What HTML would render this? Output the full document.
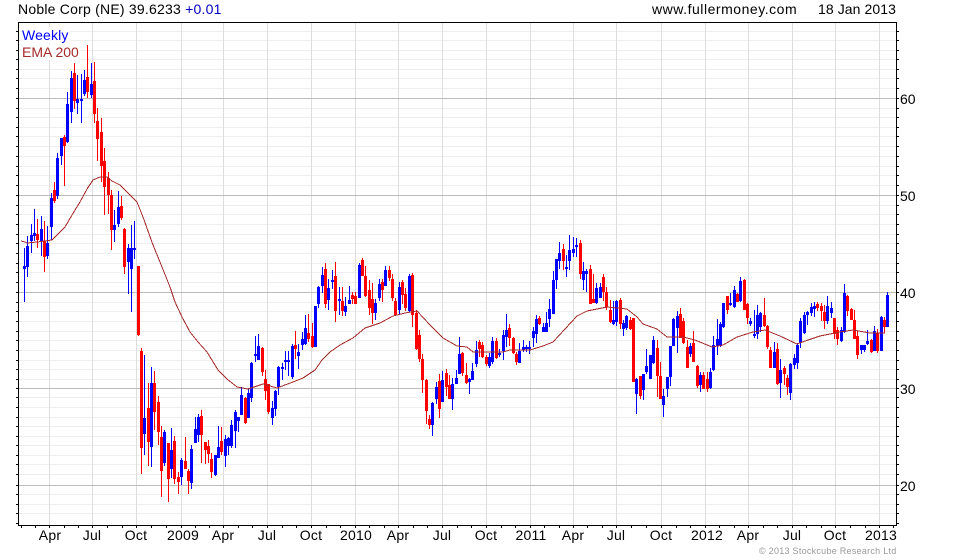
<!DOCTYPE html>
<html><head><meta charset="utf-8"><title>Noble Corp</title>
<style>
html,body{margin:0;padding:0;background:#fff;width:980px;height:560px;overflow:hidden}
#c{position:relative;width:980px;height:560px;font-family:"Liberation Sans",Arial,sans-serif;font-size:14px;color:#000}
svg{position:absolute;left:0;top:0}
.t{position:absolute;white-space:nowrap;line-height:16px;height:16px}
.a{position:absolute;top:527px;white-space:nowrap;line-height:16px;transform:translateX(-50%);letter-spacing:.2px}
.y{position:absolute;left:900px;line-height:16px}
</style></head><body><div id="c">
<svg width="980" height="560" viewBox="0 0 980 560" shape-rendering="crispEdges" fill="none">
<path stroke="#eeeeee" d="M18 31.5H896M18 40.5H896M18 50.5H896M18 59.5H896M18 69.5H896M18 78.5H896M18 88.5H896M18 108.5H896M18 117.5H896M18 127.5H896M18 136.5H896M18 146.5H896M18 156.5H896M18 166.5H896M18 175.5H896M18 185.5H896M18 205.5H896M18 214.5H896M18 224.5H896M18 234.5H896M18 243.5H896M18 253.5H896M18 263.5H896M18 272.5H896M18 282.5H896M18 302.5H896M18 311.5H896M18 321.5H896M18 331.5H896M18 340.5H896M18 350.5H896M18 360.5H896M18 369.5H896M18 379.5H896M18 397.5H896M18 407.5H896M18 417.5H896M18 426.5H896M18 436.5H896M18 445.5H896M18 455.5H896M18 464.5H896M18 474.5H896M18 494.5H896M18 504.5H896M18 513.5H896"/>
<path stroke="#dddddd" d="M49.5 23V525M92.5 23V525M136.5 23V525M181.5 23V525M223.5 23V525M267.5 23V525M311.5 23V525M355.5 23V525M398.5 23V525M442.5 23V525M486.5 23V525M530.5 23V525M573.5 23V525M616.5 23V525M661.5 23V525M705.5 23V525M748.5 23V525M792.5 23V525M835.5 23V525M879.5 23V525"/>
<path stroke="#bbbbbb" d="M18 98.5H896M18 195.5H896M18 292.5H896M18 388.5H896M18 485.5H896"/>
<path stroke="#0000ff" d="M24.5 248V302M27.5 236V277M31.5 224V253M34.5 209V241M41.5 216V256M47.5 226V259M51.5 193V240M57.5 153V199M61.5 138V165M67.5 92V143M71.5 71V123M77.5 75V114M81.5 74V123M84.5 70V96M91.5 63V98M114.5 210V242M118.5 191V227M128.5 244V294M131.5 225V312M134.5 221V259M144.5 355V455M151.5 367V467M164.5 430V466M171.5 428V478M181.5 458V485M191.5 445V489M195.5 417V442M198.5 414V442M215.5 455V476M218.5 426V458M225.5 435V467M228.5 437V455M231.5 420V448M235.5 410V448M238.5 417V432M241.5 387V415M248.5 388V418M251.5 362V402M255.5 336V362M258.5 334V360M272.5 401V425M275.5 390V416M278.5 366V395M282.5 363V380M285.5 351V370M288.5 351V376M292.5 344V379M298.5 344V369M302.5 332V350M305.5 315V345M315.5 306V347M318.5 286V308M322.5 267V293M328.5 279V310M332.5 270V289M339.5 287V315M345.5 297V316M349.5 286V304M359.5 263V298M375.5 299V320M379.5 279V301M385.5 266V286M399.5 282V315M409.5 274V312M432.5 402V436M436.5 382V404M442.5 371V402M452.5 378V410M456.5 370V384M459.5 337V374M469.5 378V394M472.5 363V380M476.5 341V367M489.5 353V368M492.5 337V364M499.5 349V357M503.5 330V360M506.5 314V347M519.5 343V363M523.5 340V352M526.5 345V352M529.5 341V354M533.5 327V347M536.5 315V343M543.5 323V332M546.5 312V332M549.5 299V327M553.5 271V314M556.5 259V289M559.5 242V269M566.5 255V277M569.5 235V270M573.5 237V257M576.5 238V257M583.5 262V290M586.5 269V292M596.5 283V304M600.5 283V298M613.5 301V325M616.5 300V326M623.5 320V336M626.5 315V330M636.5 378V414M643.5 374V400M646.5 349V374M650.5 355V379M653.5 336V364M663.5 389V417M667.5 377V397M670.5 346V386M673.5 318V346M677.5 311V353M690.5 343V357M700.5 372V392M710.5 368V389M713.5 336V371M717.5 319V355M720.5 322V347M723.5 303V328M730.5 293V306M734.5 286V308M740.5 277V302M750.5 318V326M754.5 310V338M757.5 305V339M760.5 312V332M774.5 342V368M780.5 359V398M790.5 363V400M794.5 354V369M797.5 343V369M800.5 318V348M804.5 312V334M807.5 311V325M811.5 303V316M814.5 302V317M827.5 296V324M831.5 302V318M841.5 327V342M844.5 284V333M861.5 345V354M864.5 345V352M867.5 330V345M874.5 326V351M881.5 316V351M887.5 292V327"/>
<path stroke="#0000ff" stroke-width="3" d="M24.5 266V269M27.5 246V267M31.5 235V241M34.5 233V236M41.5 229V241M47.5 243V256M51.5 198V227M57.5 158V196M61.5 138V156M67.5 104V142M71.5 78V112M77.5 99V103M81.5 99V101M84.5 80V94M91.5 84V95M114.5 225V230M118.5 207V224M128.5 248V262M131.5 248V269M134.5 248V250M144.5 418V434M151.5 383V447M164.5 432V463M171.5 450V469M181.5 460V477M191.5 449V483M195.5 429V443M198.5 417V435M215.5 455V475M218.5 447V458M225.5 439V456M228.5 438V446M231.5 425V446M235.5 412V431M238.5 417V421M241.5 395V415M248.5 393V418M251.5 363V398M255.5 354V356M258.5 346V360M272.5 408V418M275.5 391V409M278.5 367V387M282.5 367V369M285.5 360V362M288.5 360V362M292.5 346V377M298.5 352V356M302.5 339V345M305.5 328V344M315.5 306V347M318.5 287V304M322.5 275V286M328.5 288V300M332.5 280V282M339.5 299V301M345.5 306V312M349.5 300V304M359.5 265V298M375.5 303V313M379.5 284V298M385.5 270V286M399.5 287V310M409.5 276V311M432.5 403V425M436.5 387V399M442.5 380V402M452.5 384V399M456.5 378V384M459.5 354V374M469.5 379V382M472.5 371V380M476.5 350V364M489.5 357V366M492.5 341V362M499.5 353V355M503.5 335V351M506.5 330V337M519.5 351V363M523.5 347V350M526.5 347V349M529.5 347V349M533.5 331V338M536.5 319V334M543.5 327V332M546.5 323V332M549.5 309V319M553.5 280V314M556.5 259V280M559.5 253V261M566.5 267V269M569.5 250V261M573.5 249V253M576.5 245V247M583.5 271V280M586.5 271V274M596.5 288V303M600.5 287V298M613.5 320V324M616.5 301V322M623.5 323V329M626.5 316V328M636.5 379V394M643.5 374V390M646.5 366V372M650.5 355V379M653.5 340V363M663.5 396V405M667.5 377V389M670.5 346V377M673.5 319V346M677.5 316V328M690.5 346V354M700.5 375V385M710.5 372V388M713.5 345V370M717.5 339V346M720.5 324V346M723.5 303V327M730.5 303V305M734.5 290V307M740.5 281V301M750.5 321V324M754.5 334V336M757.5 315V334M760.5 313V327M774.5 352V368M780.5 370V383M790.5 364V393M794.5 358V365M797.5 345V363M800.5 321V343M804.5 315V333M807.5 312V315M811.5 307V313M814.5 306V309M827.5 306V321M831.5 308V313M841.5 330V341M844.5 293V332M861.5 345V350M864.5 345V350M867.5 341V344M874.5 331V351M881.5 317V351M887.5 295V327"/>
<path stroke="#ff0000" d="M37.5 219V248M44.5 221V272M54.5 182V203M64.5 135V186M74.5 63V109M87.5 45V98M94.5 62V123M97.5 108V161M101.5 118V182M104.5 148V215M108.5 172V214M111.5 190V250M121.5 196V220M124.5 228V274M138.5 266V336M141.5 348V474M148.5 383V466M154.5 371V430M158.5 396V445M161.5 426V497M168.5 443V502M174.5 436V484M178.5 472V494M185.5 437V469M188.5 469V494M201.5 410V463M205.5 442V464M208.5 440V463M211.5 453V478M221.5 427V455M245.5 397V424M262.5 347V376M265.5 370V400M268.5 384V414M295.5 331V359M308.5 314V342M312.5 323V348M325.5 263V308M335.5 262V322M342.5 287V316M352.5 292V304M355.5 292V304M362.5 258V276M365.5 266V297M369.5 280V315M372.5 283V324M382.5 279V302M389.5 266V281M392.5 274V301M395.5 298V315M402.5 280V304M405.5 288V311M412.5 273V327M416.5 310V350M419.5 330V362M422.5 354V393M426.5 379V424M429.5 415V429M439.5 374V418M446.5 369V396M449.5 375V399M462.5 352V376M466.5 363V384M479.5 340V357M482.5 342V358M486.5 355V366M496.5 338V359M509.5 324V346M513.5 337V354M516.5 352V365M539.5 316V325M563.5 244V270M580.5 240V279M590.5 265V304M593.5 274V303M603.5 274V301M606.5 287V310M610.5 300V323M620.5 298V329M630.5 317V330M633.5 318V382M640.5 376V399M657.5 340V397M660.5 362V399M680.5 308V338M683.5 318V344M687.5 340V368M693.5 331V362M697.5 365V388M703.5 372V389M707.5 372V392M727.5 296V314M737.5 293V302M744.5 279V310M747.5 303V324M764.5 298V327M767.5 325V349M770.5 347V368M777.5 343V385M784.5 366V385M787.5 375V395M817.5 302V311M821.5 303V321M824.5 305V329M834.5 318V339M837.5 327V345M847.5 295V316M851.5 308V320M854.5 310V339M857.5 331V359M871.5 339V353M877.5 329V353M884.5 317V333"/>
<path stroke="#ff0000" stroke-width="3" d="M37.5 234V240M44.5 241V257M54.5 190V201M64.5 137V146M74.5 73V101M87.5 77V92M94.5 81V114M97.5 121V139M101.5 132V166M104.5 161V187M108.5 178V195M111.5 195V230M121.5 206V218M124.5 229V267M138.5 266V335M141.5 351V448M148.5 408V442M154.5 383V412M158.5 402V432M161.5 437V471M168.5 443V479M174.5 441V479M178.5 477V482M185.5 461V469M188.5 471V481M201.5 416V435M205.5 442V450M208.5 446V454M211.5 459V472M221.5 441V452M245.5 398V423M262.5 348V372M265.5 379V391M268.5 384V412M295.5 345V349M308.5 333V339M312.5 336V347M325.5 269V304M335.5 276V311M342.5 301V311M352.5 295V299M355.5 296V304M362.5 260V276M365.5 276V296M369.5 290V308M372.5 299V313M382.5 282V290M389.5 270V278M392.5 279V298M395.5 301V315M402.5 282V295M405.5 294V308M412.5 275V315M416.5 313V349M419.5 335V359M422.5 359V380M426.5 380V411M429.5 419V425M439.5 381V409M446.5 373V387M449.5 385V399M462.5 353V373M466.5 375V383M479.5 342V349M482.5 345V357M486.5 357V364M496.5 341V358M509.5 328V338M513.5 338V353M516.5 354V362M539.5 318V324M563.5 249V261M580.5 243V274M590.5 269V304M593.5 299V303M603.5 277V292M606.5 292V307M610.5 310V322M620.5 300V324M630.5 320V329M633.5 318V382M640.5 376V396M657.5 348V376M660.5 376V399M680.5 314V338M683.5 321V343M687.5 347V368M693.5 343V362M697.5 366V386M703.5 375V389M707.5 379V389M727.5 296V310M737.5 294V302M744.5 280V310M747.5 304V318M764.5 315V326M767.5 326V347M770.5 350V368M777.5 349V384M784.5 368V374M787.5 378V387M817.5 304V308M821.5 306V311M824.5 312V321M834.5 318V334M837.5 330V339M847.5 296V311M851.5 309V320M854.5 320V339M857.5 336V355M871.5 340V352M877.5 333V351M884.5 320V327"/>
<polyline stroke="#a52a2a" points="21,241 25,242 27,243 37,242 52,240 58,234 65,227 72,215 80,202 87,189 93,180 100,177 107,177 112,181 120,185 130,195 137,202 143,217 153,245 160,262 170,287 175,302 182,317 190,332 198,342 207,352 218,370 227,379 237,387 248,389 263,384 277,388 293,382 303,378 315,370 322,360 330,352 340,345 353,338 365,328 380,323 393,316 405,313 417,311 430,325 443,338 457,346 467,347 473,352 503,352 510,350 530,350 543,346 553,342 565,329 577,316 587,311 607,307 627,309 637,317 643,324 657,329 667,337 683,337 695,340 712,347 723,345 737,337 753,332 765,330 780,336 797,344 808,340 820,336 840,332 853,330 870,333 885,333"/>
<path stroke="#000" d="M18.5 22.5H896.5V525.5H18.5ZM16 31.5H18M16 40.5H18M16 50.5H18M16 59.5H18M16 69.5H18M16 78.5H18M16 88.5H18M16 98.5H18M16 108.5H18M16 117.5H18M16 127.5H18M16 136.5H18M16 146.5H18M16 156.5H18M16 166.5H18M16 175.5H18M16 185.5H18M16 195.5H18M16 205.5H18M16 214.5H18M16 224.5H18M16 234.5H18M16 243.5H18M16 253.5H18M16 263.5H18M16 272.5H18M16 282.5H18M16 292.5H18M16 302.5H18M16 311.5H18M16 321.5H18M16 331.5H18M16 340.5H18M16 350.5H18M16 360.5H18M16 369.5H18M16 379.5H18M16 388.5H18M16 397.5H18M16 407.5H18M16 417.5H18M16 426.5H18M16 436.5H18M16 445.5H18M16 455.5H18M16 464.5H18M16 474.5H18M16 485.5H18M16 494.5H18M16 504.5H18M16 513.5H18M16 523.5H18M897 31.5H899M897 40.5H899M897 50.5H899M897 59.5H899M897 69.5H899M897 78.5H899M897 88.5H899M897 98.5H899M897 108.5H899M897 117.5H899M897 127.5H899M897 136.5H899M897 146.5H899M897 156.5H899M897 166.5H899M897 175.5H899M897 185.5H899M897 195.5H899M897 205.5H899M897 214.5H899M897 224.5H899M897 234.5H899M897 243.5H899M897 253.5H899M897 263.5H899M897 272.5H899M897 282.5H899M897 292.5H899M897 302.5H899M897 311.5H899M897 321.5H899M897 331.5H899M897 340.5H899M897 350.5H899M897 360.5H899M897 369.5H899M897 379.5H899M897 388.5H899M897 397.5H899M897 407.5H899M897 417.5H899M897 426.5H899M897 436.5H899M897 445.5H899M897 455.5H899M897 464.5H899M897 474.5H899M897 485.5H899M897 494.5H899M897 504.5H899M897 513.5H899M897 523.5H899M21.5 526V528M35.5 526V528M49.5 526V528M64.5 526V528M78.5 526V528M92.5 526V528M107.5 526V528M122.5 526V528M136.5 526V528M151.5 526V528M166.5 526V528M181.5 526V528M195.5 526V528M209.5 526V528M223.5 526V528M238.5 526V528M252.5 526V528M267.5 526V528M282.5 526V528M296.5 526V528M311.5 526V528M326.5 526V528M340.5 526V528M355.5 526V528M369.5 526V528M384.5 526V528M398.5 526V528M413.5 526V528M427.5 526V528M442.5 526V528M457.5 526V528M471.5 526V528M486.5 526V528M501.5 526V528M515.5 526V528M530.5 526V528M544.5 526V528M559.5 526V528M573.5 526V528M587.5 526V528M602.5 526V528M616.5 526V528M631.5 526V528M646.5 526V528M661.5 526V528M676.5 526V528M690.5 526V528M705.5 526V528M719.5 526V528M734.5 526V528M748.5 526V528M763.5 526V528M777.5 526V528M792.5 526V528M806.5 526V528M821.5 526V528M835.5 526V528M850.5 526V528M865.5 526V528M879.5 526V528M893.5 526V528"/>
</svg>
<div class="t" style="left:18px;top:1px;letter-spacing:.22px">Noble Corp (NE) 39.6233 <span style="color:#0000c0">+0.01</span></div>
<div class="t" style="left:652px;top:1px;letter-spacing:.53px">www.fullermoney.com</div>
<div class="t" style="left:818px;top:1px;letter-spacing:.08px">18 Jan 2013</div>
<div class="t" style="left:22px;top:27px;color:#0000ff;background:#fff;padding-right:1px;letter-spacing:.15px">Weekly</div>
<div class="t" style="left:22px;top:44px;color:#a52a2a;background:#fff;padding-right:1px">EMA 200</div>
<div class="y" style="top:91px">60</div>
<div class="y" style="top:188px">50</div>
<div class="y" style="top:285px">40</div>
<div class="y" style="top:381px">30</div>
<div class="y" style="top:478px">20</div>
<div class="a" style="left:50px">Apr</div>
<div class="a" style="left:92px">Jul</div>
<div class="a" style="left:136px">Oct</div>
<div class="a" style="left:183px">2009</div>
<div class="a" style="left:223px">Apr</div>
<div class="a" style="left:267px">Jul</div>
<div class="a" style="left:311px">Oct</div>
<div class="a" style="left:356px">2010</div>
<div class="a" style="left:398px">Apr</div>
<div class="a" style="left:442px">Jul</div>
<div class="a" style="left:486px">Oct</div>
<div class="a" style="left:531px">2011</div>
<div class="a" style="left:573px">Apr</div>
<div class="a" style="left:616px">Jul</div>
<div class="a" style="left:661px">Oct</div>
<div class="a" style="left:707px">2012</div>
<div class="a" style="left:748px">Apr</div>
<div class="a" style="left:792px">Jul</div>
<div class="a" style="left:835px">Oct</div>
<div class="a" style="left:881px">2013</div>
<div class="t" style="left:759px;top:543px;font-size:9px;color:#999;letter-spacing:.27px">© 2013 Stockcube Research Ltd</div>
</div></body></html>
